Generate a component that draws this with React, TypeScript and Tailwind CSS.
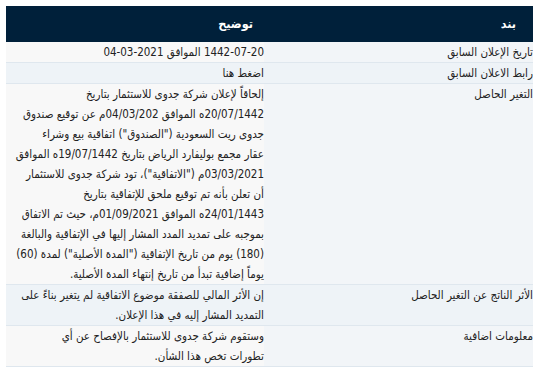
import React from "react";

type Row = { label: string; lines: React.ReactNode[] };

const rows: Row[] = [
  {
    label: "تاريخ الإعلان السابق",
    lines: [
      <>
        <span dir="ltr">1442-07-20</span> الموافق <span dir="ltr">04-03-2021</span>
      </>,
    ],
  },
  { label: "رابط الاعلان السابق", lines: ["اضغط هنا"] },
  {
    label: "التغير الحاصل",
    lines: [
      "إلحاقاً لإعلان شركة جدوى للاستثمار بتاريخ",
      "20/07/1442ه الموافق 04/03/202م عن توقيع صندوق",
      "جدوى ريت السعودية (\"الصندوق\") اتفاقية بيع وشراء",
      "عقار مجمع بوليفارد الرياض بتاريخ 19/07/1442ه الموافق",
      "03/03/2021م (\"الاتفاقية\")، تود شركة جدوى للاستثمار",
      "أن تعلن بأنه تم توقيع ملحق للإتفاقية بتاريخ",
      "24/01/1443ه الموافق 01/09/2021م، حيث تم الاتفاق",
      "بموجبه على تمديد المدد المشار إليها في الإتفاقية والبالغة",
      "(180) يوم من تاريخ الإتفاقية (\"المدة الأصلية\") لمدة (60)",
      "يوماً إضافية تبدأ من تاريخ إنتهاء المدة الأصلية.",
    ],
  },
  {
    label: "الأثر الناتج عن التغير الحاصل",
    lines: [
      "إن الأثر المالي للصفقة موضوع الاتفاقية لم يتغير بناءً على",
      "التمديد المشار إليه في هذا الإعلان.",
    ],
  },
  {
    label: "معلومات اضافية",
    lines: [
      "وستقوم شركة جدوى للاستثمار بالإفصاح عن أي",
      "تطورات تخص هذا الشأن.",
    ],
  },
];

export default function App() {
  return (
    <div
      className="w-[533px] h-[373px] overflow-hidden bg-white pt-[6px] text-[11.5px] text-[#222]"
      style={{ fontFamily: '"DejaVu Sans Condensed", "DejaVu Sans", sans-serif', fontStretch: "condensed" }}
    >
      <table dir="rtl" className="ml-[6px] w-[536px] table-fixed border-collapse">
        <colgroup>
          <col className="w-[278px]" />
          <col className="w-[258px]" />
        </colgroup>
        <thead>
          <tr className="h-[36px] bg-[#00203a] text-[12.5px] text-white">
            <th className="pr-[26px] text-right font-bold">بند</th>
            <th className="pr-[11px] text-right font-bold">توضيح</th>
          </tr>
        </thead>
        <tbody>
          {rows.map((row, i) => {
            const even = i % 2 === 1;
            return (
              <tr key={row.label} className="border-b border-[#dfe7ee] align-top leading-[20px]">
                <td className={`pr-[9px] text-right ${even ? "bg-[#eef3f7]" : "bg-[#f2f5f8]"}`}>
                  {row.label}
                </td>
                <td className={`text-right ${even ? "bg-[#eef3f7]" : "bg-[#f8f8f8]"}`}>
                  {row.lines.map((l, j) => (
                    <div key={j} className="whitespace-nowrap">
                      {l}
                    </div>
                  ))}
                </td>
              </tr>
            );
          })}
        </tbody>
      </table>
    </div>
  );
}
